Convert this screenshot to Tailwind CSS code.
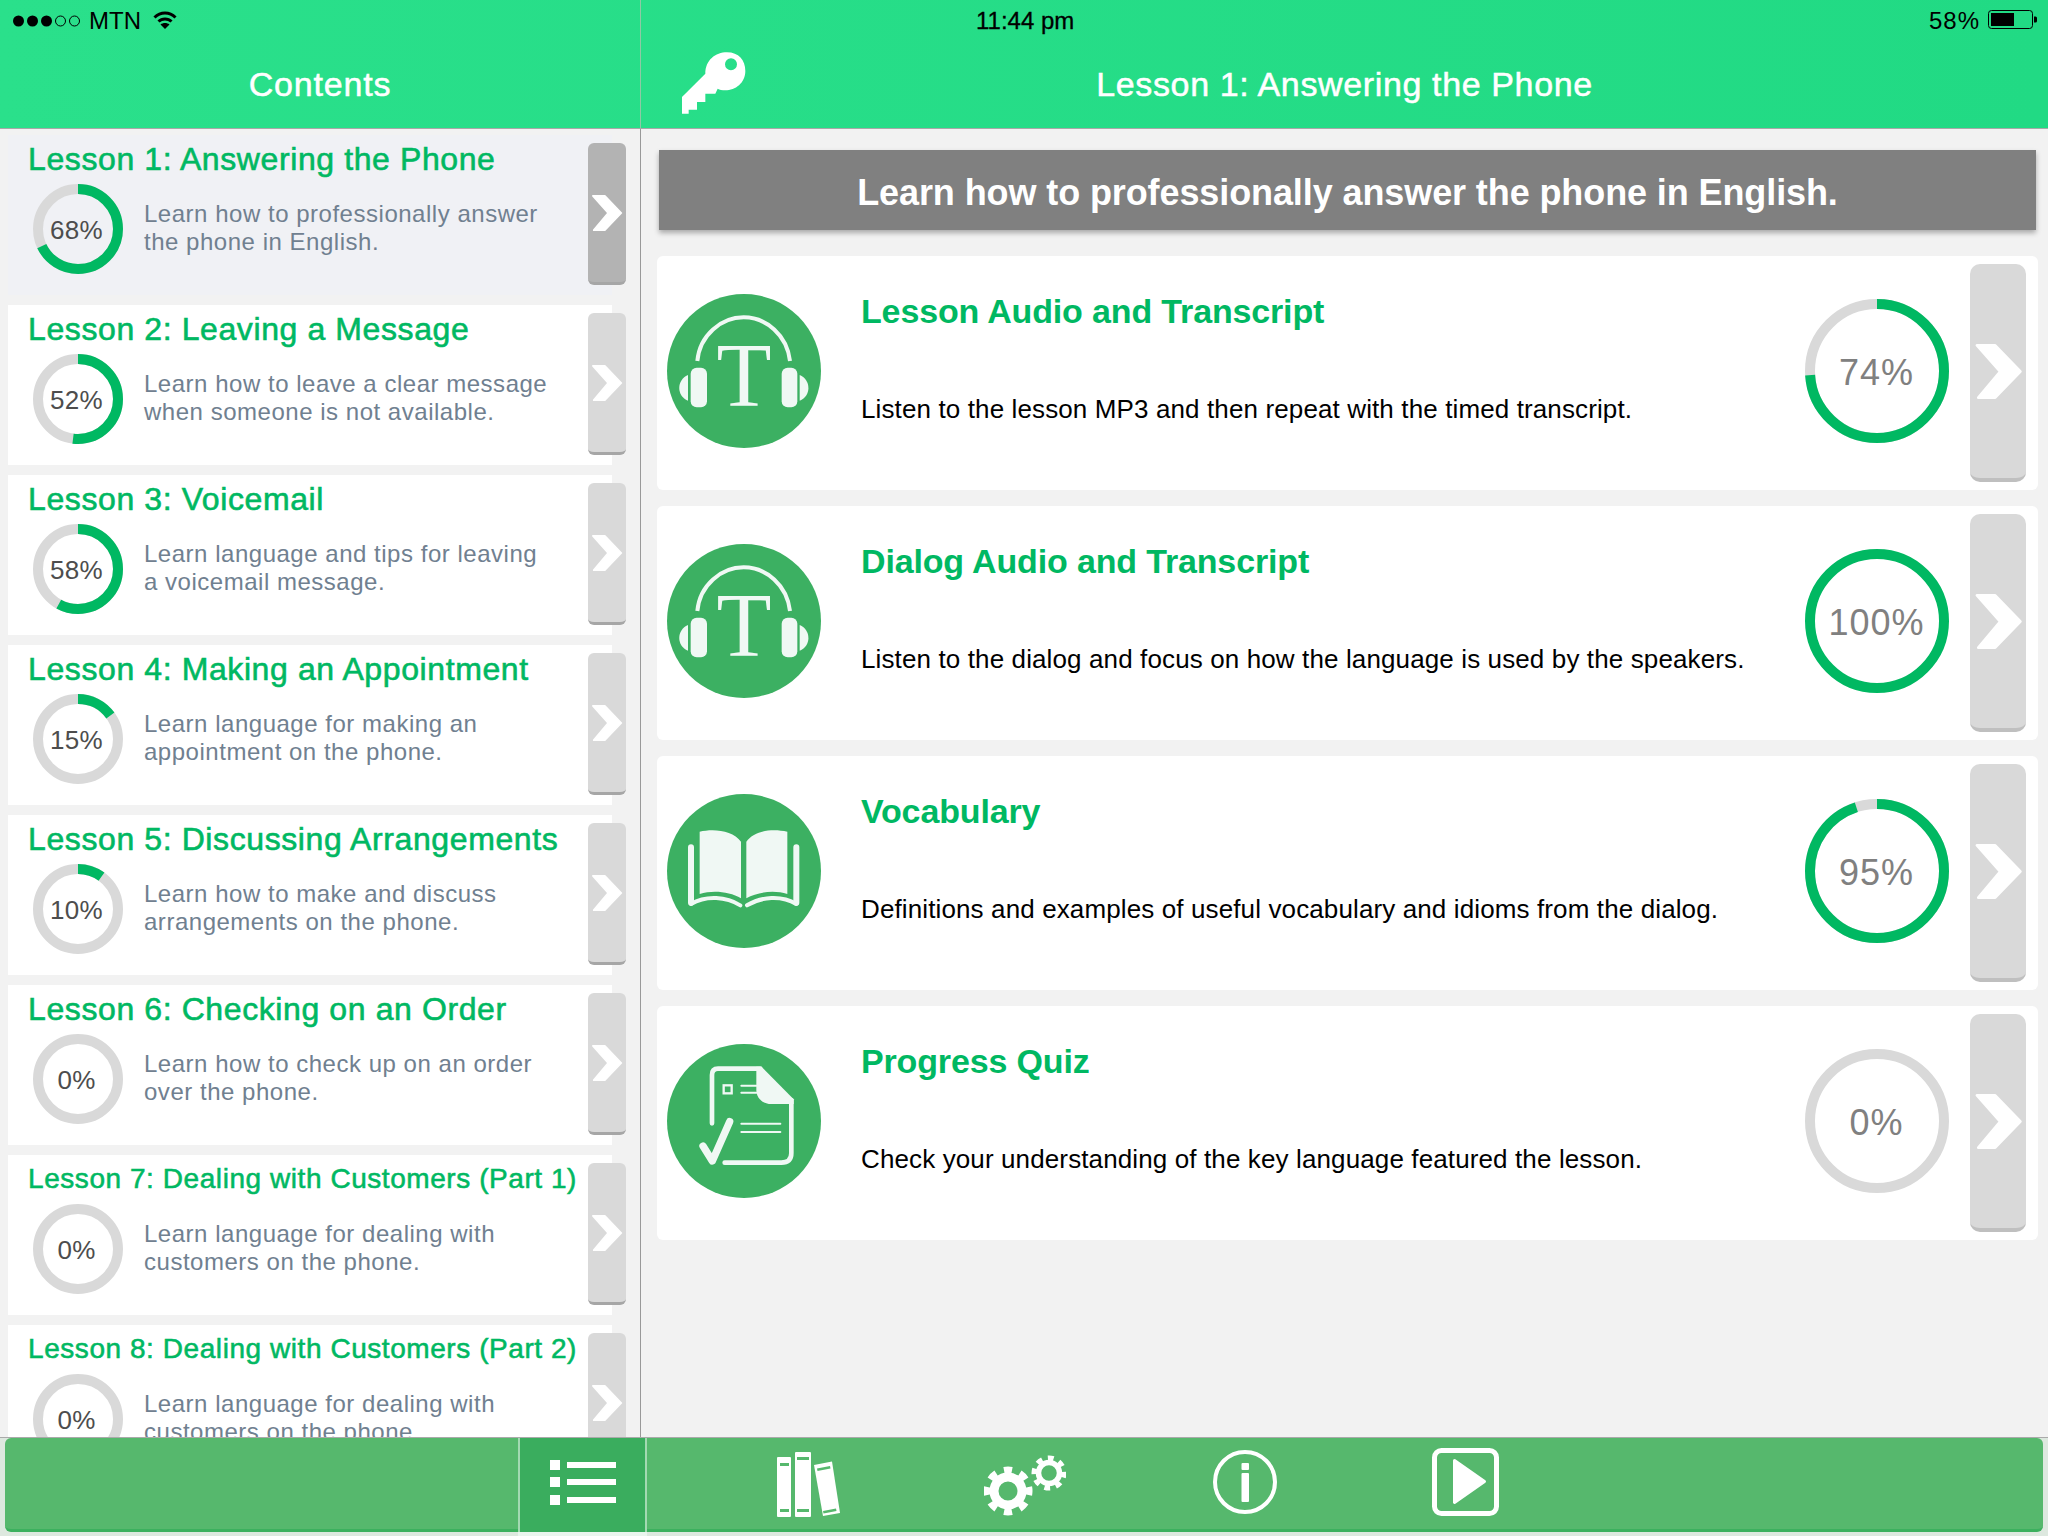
<!DOCTYPE html>
<html lang="en">
<head>
<meta charset="utf-8">
<title>Lesson 1</title>
<script src="https://cdn.jsdelivr.net/npm/@tailwindcss/browser@4"></script>
</head>
<body class="m-0 bg-[#f2f2f2]">
<div class="w-[2048px] h-[1536px] overflow-hidden flex flex-col font-['Liberation_Sans',Arial,sans-serif]">

  <!-- top band -->
  <header class="h-[129px] shrink-0 flex border-b border-[#a8a8a8] bg-gradient-to-r from-[#2ae08b] to-[#21da84]">
    <div class="w-[641px] shrink-0 border-r border-[#8fc9a5] flex flex-col">
      <div class="h-[40px] flex items-center pl-[13px] pt-[2px] text-[24px] text-black">
        <svg width="67" height="12" viewBox="0 0 67 12" class="mr-[9px]">
          <circle cx="5.5" cy="6" r="5.5"/><circle cx="19.5" cy="6" r="5.5"/><circle cx="33.5" cy="6" r="5.5"/>
          <circle cx="47.5" cy="6" r="5" fill="none" stroke="#000" stroke-width="1"/><circle cx="61.5" cy="6" r="5" fill="none" stroke="#000" stroke-width="1"/>
        </svg>
        <span>MTN</span>
        <svg width="24" height="19" viewBox="0 0 24 19" class="ml-[12px] -mt-[3px]">
          <path d="M1.5 7.5C7.5 1.5 16.5 1.5 22.5 7.5" fill="none" stroke="#000" stroke-width="3"/>
          <path d="M5.5 11.5C9 8 15 8 18.5 11.5" fill="none" stroke="#000" stroke-width="3"/>
          <path d="M7.5 14.5C10 12.5 14 12.5 16.5 14.5L12 19Z"/>
        </svg>
      </div>
      <div class="flex-1 flex items-center justify-center text-white text-[34px] tracking-[0.8px] [-webkit-text-stroke:0.5px_#fff]">Contents</div>
    </div>
    <div class="flex-1 flex flex-col">
      <div class="h-[40px] flex items-center pl-[335px] pr-[11px] pt-[2px] justify-between text-[24px] text-black">
        <span class="[-webkit-text-stroke:0.3px_#000]">11:44 pm</span>
        <div class="flex items-center gap-[8px] -mt-[2px]">
          <span class="tracking-[1px] pt-[2px]">58%</span>
          <svg width="49" height="20" viewBox="0 0 49 20">
            <rect x="0.5" y="0.5" width="44" height="18" rx="3" fill="none" stroke="#000" stroke-width="1"/>
            <rect x="3" y="3" width="23" height="13"/>
            <path d="M46 6.5h1.5a1.5 1.5 0 0 1 1.5 1.5v3a1.5 1.5 0 0 1-1.5 1.5H46Z"/>
          </svg>
        </div>
      </div>
      <div class="flex-1 grid grid-cols-[1fr_auto_1fr] items-center">
        <svg width="65" height="63" viewBox="62 62 195 189" class="ml-[40px] -mt-[4px]">
          <path fill="#fff" fill-rule="evenodd" d="M135 130C135 90 165 66 200 66C235 66 255 90 255 122C255 158 225 180 195 180C185 180 178 178 172 175L165 190H135V215H110V238H85V250H65V200Z M212 84A18 18 0 1 0 212 120A18 18 0 1 0 212 84Z"/>
        </svg>
        <div class="text-white text-[34px] tracking-[0.63px] [-webkit-text-stroke:0.5px_#fff]">Lesson 1: Answering the Phone</div>
        <div></div>
      </div>
    </div>
  </header>

  <!-- middle -->
  <main class="flex-1 min-h-0 flex">
    <aside class="w-[641px] shrink-0 border-r border-[#999] overflow-hidden pt-[6px] pl-[8px]">

      <article class="relative w-[604px] h-[160px] mb-[10px] bg-[#f0f1f5] pl-[20px] pt-[6px]">
        <h2 class="text-[32px] leading-[36px] tracking-[0.6px] text-[#00b862] [-webkit-text-stroke:0.6px_#00b862] whitespace-nowrap">Lesson 1: Answering the Phone</h2>
        <div class="flex mt-[7px] ml-[5px]">
          <div class="relative w-[90px] h-[90px] shrink-0">
            <svg width="90" height="90" viewBox="0 0 90 90" class="-rotate-90"><circle cx="45" cy="45" r="40" fill="none" stroke="#d9d9d9" stroke-width="10"/><circle cx="45" cy="45" r="40" fill="none" stroke="#00b862" stroke-width="10" pathLength="100" stroke-dasharray="68 100"/></svg>
            <span class="absolute inset-0 pt-[2px] -ml-[3px] flex items-center justify-center text-[26px] tracking-[0.3px] text-[#4d4d4d]">68%</span>
          </div>
          <p class="ml-[21px] pt-[16px] text-[24px] leading-[28px] tracking-[0.52px] text-[#708090] whitespace-pre-line">Learn how to professionally answer
the phone in English.</p>
        </div>
        <button class="absolute left-[580px] top-[8px] w-[38px] h-[142px] rounded-[6px] bg-[#b3b3b3] border-b-[3px] border-[#a6a6a6] flex items-center justify-center">
          <svg width="32" height="36" viewBox="825 1032 140 166"><path fill="#fff" stroke="#fff" stroke-width="8" stroke-linejoin="round" d="M830 1036H885L961 1115L885 1194H834L900 1115Z"/></svg>
        </button>
      </article>

      <article class="relative w-[604px] h-[160px] mb-[10px] bg-white pl-[20px] pt-[6px]">
        <h2 class="text-[32px] leading-[36px] tracking-[0.6px] text-[#00b862] [-webkit-text-stroke:0.6px_#00b862] whitespace-nowrap">Lesson 2: Leaving a Message</h2>
        <div class="flex mt-[7px] ml-[5px]">
          <div class="relative w-[90px] h-[90px] shrink-0">
            <svg width="90" height="90" viewBox="0 0 90 90" class="-rotate-90"><circle cx="45" cy="45" r="40" fill="none" stroke="#d9d9d9" stroke-width="10"/><circle cx="45" cy="45" r="40" fill="none" stroke="#00b862" stroke-width="10" pathLength="100" stroke-dasharray="52 100"/></svg>
            <span class="absolute inset-0 pt-[2px] -ml-[3px] flex items-center justify-center text-[26px] tracking-[0.3px] text-[#4d4d4d]">52%</span>
          </div>
          <p class="ml-[21px] pt-[16px] text-[24px] leading-[28px] tracking-[0.52px] text-[#708090] whitespace-pre-line">Learn how to leave a clear message
when someone is not available.</p>
        </div>
        <button class="absolute left-[580px] top-[8px] w-[38px] h-[142px] rounded-[6px] bg-[#d9d9d9] border-b-[3px] border-[#a6a6a6] flex items-center justify-center">
          <svg width="32" height="36" viewBox="825 1032 140 166"><path fill="#fff" stroke="#fff" stroke-width="8" stroke-linejoin="round" d="M830 1036H885L961 1115L885 1194H834L900 1115Z"/></svg>
        </button>
      </article>

      <article class="relative w-[604px] h-[160px] mb-[10px] bg-white pl-[20px] pt-[6px]">
        <h2 class="text-[32px] leading-[36px] tracking-[0.6px] text-[#00b862] [-webkit-text-stroke:0.6px_#00b862] whitespace-nowrap">Lesson 3: Voicemail</h2>
        <div class="flex mt-[7px] ml-[5px]">
          <div class="relative w-[90px] h-[90px] shrink-0">
            <svg width="90" height="90" viewBox="0 0 90 90" class="-rotate-90"><circle cx="45" cy="45" r="40" fill="none" stroke="#d9d9d9" stroke-width="10"/><circle cx="45" cy="45" r="40" fill="none" stroke="#00b862" stroke-width="10" pathLength="100" stroke-dasharray="58 100"/></svg>
            <span class="absolute inset-0 pt-[2px] -ml-[3px] flex items-center justify-center text-[26px] tracking-[0.3px] text-[#4d4d4d]">58%</span>
          </div>
          <p class="ml-[21px] pt-[16px] text-[24px] leading-[28px] tracking-[0.52px] text-[#708090] whitespace-pre-line">Learn language and tips for leaving
a voicemail message.</p>
        </div>
        <button class="absolute left-[580px] top-[8px] w-[38px] h-[142px] rounded-[6px] bg-[#d9d9d9] border-b-[3px] border-[#a6a6a6] flex items-center justify-center">
          <svg width="32" height="36" viewBox="825 1032 140 166"><path fill="#fff" stroke="#fff" stroke-width="8" stroke-linejoin="round" d="M830 1036H885L961 1115L885 1194H834L900 1115Z"/></svg>
        </button>
      </article>

      <article class="relative w-[604px] h-[160px] mb-[10px] bg-white pl-[20px] pt-[6px]">
        <h2 class="text-[32px] leading-[36px] tracking-[0.6px] text-[#00b862] [-webkit-text-stroke:0.6px_#00b862] whitespace-nowrap">Lesson 4: Making an Appointment</h2>
        <div class="flex mt-[7px] ml-[5px]">
          <div class="relative w-[90px] h-[90px] shrink-0">
            <svg width="90" height="90" viewBox="0 0 90 90" class="-rotate-90"><circle cx="45" cy="45" r="40" fill="none" stroke="#d9d9d9" stroke-width="10"/><circle cx="45" cy="45" r="40" fill="none" stroke="#00b862" stroke-width="10" pathLength="100" stroke-dasharray="15 100"/></svg>
            <span class="absolute inset-0 pt-[2px] -ml-[3px] flex items-center justify-center text-[26px] tracking-[0.3px] text-[#4d4d4d]">15%</span>
          </div>
          <p class="ml-[21px] pt-[16px] text-[24px] leading-[28px] tracking-[0.52px] text-[#708090] whitespace-pre-line">Learn language for making an
appointment on the phone.</p>
        </div>
        <button class="absolute left-[580px] top-[8px] w-[38px] h-[142px] rounded-[6px] bg-[#d9d9d9] border-b-[3px] border-[#a6a6a6] flex items-center justify-center">
          <svg width="32" height="36" viewBox="825 1032 140 166"><path fill="#fff" stroke="#fff" stroke-width="8" stroke-linejoin="round" d="M830 1036H885L961 1115L885 1194H834L900 1115Z"/></svg>
        </button>
      </article>

      <article class="relative w-[604px] h-[160px] mb-[10px] bg-white pl-[20px] pt-[6px]">
        <h2 class="text-[32px] leading-[36px] tracking-[0.6px] text-[#00b862] [-webkit-text-stroke:0.6px_#00b862] whitespace-nowrap">Lesson 5: Discussing Arrangements</h2>
        <div class="flex mt-[7px] ml-[5px]">
          <div class="relative w-[90px] h-[90px] shrink-0">
            <svg width="90" height="90" viewBox="0 0 90 90" class="-rotate-90"><circle cx="45" cy="45" r="40" fill="none" stroke="#d9d9d9" stroke-width="10"/><circle cx="45" cy="45" r="40" fill="none" stroke="#00b862" stroke-width="10" pathLength="100" stroke-dasharray="10 100"/></svg>
            <span class="absolute inset-0 pt-[2px] -ml-[3px] flex items-center justify-center text-[26px] tracking-[0.3px] text-[#4d4d4d]">10%</span>
          </div>
          <p class="ml-[21px] pt-[16px] text-[24px] leading-[28px] tracking-[0.52px] text-[#708090] whitespace-pre-line">Learn how to make and discuss
arrangements on the phone.</p>
        </div>
        <button class="absolute left-[580px] top-[8px] w-[38px] h-[142px] rounded-[6px] bg-[#d9d9d9] border-b-[3px] border-[#a6a6a6] flex items-center justify-center">
          <svg width="32" height="36" viewBox="825 1032 140 166"><path fill="#fff" stroke="#fff" stroke-width="8" stroke-linejoin="round" d="M830 1036H885L961 1115L885 1194H834L900 1115Z"/></svg>
        </button>
      </article>

      <article class="relative w-[604px] h-[160px] mb-[10px] bg-white pl-[20px] pt-[6px]">
        <h2 class="text-[32px] leading-[36px] tracking-[0.6px] text-[#00b862] [-webkit-text-stroke:0.6px_#00b862] whitespace-nowrap">Lesson 6: Checking on an Order</h2>
        <div class="flex mt-[7px] ml-[5px]">
          <div class="relative w-[90px] h-[90px] shrink-0">
            <svg width="90" height="90" viewBox="0 0 90 90" class="-rotate-90"><circle cx="45" cy="45" r="40" fill="none" stroke="#d9d9d9" stroke-width="10"/></svg>
            <span class="absolute inset-0 pt-[2px] -ml-[3px] flex items-center justify-center text-[26px] tracking-[0.3px] text-[#4d4d4d]">0%</span>
          </div>
          <p class="ml-[21px] pt-[16px] text-[24px] leading-[28px] tracking-[0.52px] text-[#708090] whitespace-pre-line">Learn how to check up on an order
over the phone.</p>
        </div>
        <button class="absolute left-[580px] top-[8px] w-[38px] h-[142px] rounded-[6px] bg-[#d9d9d9] border-b-[3px] border-[#a6a6a6] flex items-center justify-center">
          <svg width="32" height="36" viewBox="825 1032 140 166"><path fill="#fff" stroke="#fff" stroke-width="8" stroke-linejoin="round" d="M830 1036H885L961 1115L885 1194H834L900 1115Z"/></svg>
        </button>
      </article>

      <article class="relative w-[604px] h-[160px] mb-[10px] bg-white pl-[20px] pt-[6px]">
        <h2 class="text-[28px] leading-[36px] tracking-[0.56px] text-[#00b862] [-webkit-text-stroke:0.55px_#00b862] whitespace-nowrap">Lesson 7: Dealing with Customers (Part 1)</h2>
        <div class="flex mt-[7px] ml-[5px]">
          <div class="relative w-[90px] h-[90px] shrink-0">
            <svg width="90" height="90" viewBox="0 0 90 90" class="-rotate-90"><circle cx="45" cy="45" r="40" fill="none" stroke="#d9d9d9" stroke-width="10"/></svg>
            <span class="absolute inset-0 pt-[2px] -ml-[3px] flex items-center justify-center text-[26px] tracking-[0.3px] text-[#4d4d4d]">0%</span>
          </div>
          <p class="ml-[21px] pt-[16px] text-[24px] leading-[28px] tracking-[0.52px] text-[#708090] whitespace-pre-line">Learn language for dealing with
customers on the phone.</p>
        </div>
        <button class="absolute left-[580px] top-[8px] w-[38px] h-[142px] rounded-[6px] bg-[#d9d9d9] border-b-[3px] border-[#a6a6a6] flex items-center justify-center">
          <svg width="32" height="36" viewBox="825 1032 140 166"><path fill="#fff" stroke="#fff" stroke-width="8" stroke-linejoin="round" d="M830 1036H885L961 1115L885 1194H834L900 1115Z"/></svg>
        </button>
      </article>

      <article class="relative w-[604px] h-[160px] mb-[10px] bg-white pl-[20px] pt-[6px]">
        <h2 class="text-[28px] leading-[36px] tracking-[0.56px] text-[#00b862] [-webkit-text-stroke:0.55px_#00b862] whitespace-nowrap">Lesson 8: Dealing with Customers (Part 2)</h2>
        <div class="flex mt-[7px] ml-[5px]">
          <div class="relative w-[90px] h-[90px] shrink-0">
            <svg width="90" height="90" viewBox="0 0 90 90" class="-rotate-90"><circle cx="45" cy="45" r="40" fill="none" stroke="#d9d9d9" stroke-width="10"/></svg>
            <span class="absolute inset-0 pt-[2px] -ml-[3px] flex items-center justify-center text-[26px] tracking-[0.3px] text-[#4d4d4d]">0%</span>
          </div>
          <p class="ml-[21px] pt-[16px] text-[24px] leading-[28px] tracking-[0.52px] text-[#708090] whitespace-pre-line">Learn language for dealing with
customers on the phone.</p>
        </div>
        <button class="absolute left-[580px] top-[8px] w-[38px] h-[142px] rounded-[6px] bg-[#d9d9d9] border-b-[3px] border-[#a6a6a6] flex items-center justify-center">
          <svg width="32" height="36" viewBox="825 1032 140 166"><path fill="#fff" stroke="#fff" stroke-width="8" stroke-linejoin="round" d="M830 1036H885L961 1115L885 1194H834L900 1115Z"/></svg>
        </button>
      </article>
    </aside>

    <section class="flex-1 min-w-0 pl-[16px] pr-[10px] pt-[21px] bg-[#f2f2f2]">
      <div class="ml-[2px] mr-[2px] h-[80px] pt-[5px] bg-[#808080] shadow-[0_3px_5px_rgba(0,0,0,0.3)] flex items-center justify-center text-white text-[36px] font-bold tracking-[-0.1px] mb-[26px]">Learn how to professionally answer the phone in English.</div>

      <div class="flex flex-col gap-[16px]">
        <article class="h-[234px] bg-white rounded-[6px] flex items-start pl-[10px] pr-[12px]">
          <svg width="154" height="154" viewBox="52 42 462 462" class="mt-[38px] shrink-0">
            <circle cx="283" cy="273" r="231" fill="#3cb062"/>
            <g fill="#f0f8f4">
              <path d="M143 243C150 165 215 112 282 112C350 112 412 165 421 243" fill="none" stroke="#f0f8f4" stroke-width="12"/>
              <text x="283" y="378" text-anchor="middle" font-family="'Liberation Serif',serif" font-size="270">T</text>
              <rect x="123" y="263" width="49" height="119" rx="18"/><rect x="396" y="263" width="47" height="119" rx="18"/>
              <path d="M115 285C80 300 80 348 115 362Z"/><path d="M450 285C485 300 485 348 450 362Z"/>
            </g>
          </svg>
          <div class="ml-[40px] pt-[35px]">
            <h3 class="text-[34px] leading-[40px] font-bold tracking-[-0.15px] text-[#00b862]">Lesson Audio and Transcript</h3>
            <p class="mt-[60px] text-[26px] leading-[36px] tracking-[0.12px] text-black">Listen to the lesson MP3 and then repeat with the timed transcript.</p>
          </div>
          <div class="relative ml-auto mt-[43px] w-[144px] h-[144px] shrink-0">
            <svg width="144" height="144" viewBox="0 0 144 144" class="-rotate-90"><circle cx="72" cy="72" r="67" fill="none" stroke="#d9d9d9" stroke-width="10"/><circle cx="72" cy="72" r="67" fill="none" stroke="#00b862" stroke-width="10" pathLength="100" stroke-dasharray="74 100"/></svg>
            <span class="absolute inset-0 pt-[4px] -ml-[1px] flex items-center justify-center text-[36px] tracking-[1px] text-[#808080]">74%</span>
          </div>
          <button class="ml-[21px] mt-[8px] w-[56px] h-[218px] shrink-0 rounded-[10px] bg-[#d9d9d9] border-b-4 border-[#bfbfbf] flex items-center justify-center">
            <svg width="47" height="55" viewBox="825 1032 140 166"><path fill="#fff" stroke="#fff" stroke-width="8" stroke-linejoin="round" d="M830 1036H885L961 1115L885 1194H834L900 1115Z"/></svg>
          </button>
        </article>

        <article class="h-[234px] bg-white rounded-[6px] flex items-start pl-[10px] pr-[12px]">
          <svg width="154" height="154" viewBox="52 42 462 462" class="mt-[38px] shrink-0">
            <circle cx="283" cy="273" r="231" fill="#3cb062"/>
            <g fill="#f0f8f4">
              <path d="M143 243C150 165 215 112 282 112C350 112 412 165 421 243" fill="none" stroke="#f0f8f4" stroke-width="12"/>
              <text x="283" y="378" text-anchor="middle" font-family="'Liberation Serif',serif" font-size="270">T</text>
              <rect x="123" y="263" width="49" height="119" rx="18"/><rect x="396" y="263" width="47" height="119" rx="18"/>
              <path d="M115 285C80 300 80 348 115 362Z"/><path d="M450 285C485 300 485 348 450 362Z"/>
            </g>
          </svg>
          <div class="ml-[40px] pt-[35px]">
            <h3 class="text-[34px] leading-[40px] font-bold tracking-[-0.15px] text-[#00b862]">Dialog Audio and Transcript</h3>
            <p class="mt-[60px] text-[26px] leading-[36px] tracking-[0.12px] text-black">Listen to the dialog and focus on how the language is used by the speakers.</p>
          </div>
          <div class="relative ml-auto mt-[43px] w-[144px] h-[144px] shrink-0">
            <svg width="144" height="144" viewBox="0 0 144 144" class="-rotate-90"><circle cx="72" cy="72" r="67" fill="none" stroke="#00b862" stroke-width="10"/></svg>
            <span class="absolute inset-0 pt-[4px] -ml-[1px] flex items-center justify-center text-[36px] tracking-[1px] text-[#808080]">100%</span>
          </div>
          <button class="ml-[21px] mt-[8px] w-[56px] h-[218px] shrink-0 rounded-[10px] bg-[#d9d9d9] border-b-4 border-[#bfbfbf] flex items-center justify-center">
            <svg width="47" height="55" viewBox="825 1032 140 166"><path fill="#fff" stroke="#fff" stroke-width="8" stroke-linejoin="round" d="M830 1036H885L961 1115L885 1194H834L900 1115Z"/></svg>
          </button>
        </article>

        <article class="h-[234px] bg-white rounded-[6px] flex items-start pl-[10px] pr-[12px]">
          <svg width="154" height="154" viewBox="52 42 462 462" class="mt-[38px] shrink-0">
            <circle cx="283" cy="273" r="231" fill="#3cb062"/>
            <g fill="#f0f8f4">
              <path d="M150 155C190 145 250 150 274 185V355C240 335 190 330 150 342Z"/>
              <path d="M290 185C315 150 370 145 413 155V342C375 330 325 335 290 355Z"/>
            </g>
            <g fill="none" stroke="#f0f8f4" stroke-linecap="round">
              <path d="M124 202V368M440 202V368" stroke-width="18"/>
              <path d="M124 372C170 345 230 350 272 376M292 376C335 350 395 345 440 372" stroke-width="12"/>
            </g>
          </svg>
          <div class="ml-[40px] pt-[35px]">
            <h3 class="text-[34px] leading-[40px] font-bold tracking-[-0.15px] text-[#00b862]">Vocabulary</h3>
            <p class="mt-[60px] text-[26px] leading-[36px] tracking-[0.12px] text-black">Definitions and examples of useful vocabulary and idioms from the dialog.</p>
          </div>
          <div class="relative ml-auto mt-[43px] w-[144px] h-[144px] shrink-0">
            <svg width="144" height="144" viewBox="0 0 144 144" class="-rotate-90"><circle cx="72" cy="72" r="67" fill="none" stroke="#d9d9d9" stroke-width="10"/><circle cx="72" cy="72" r="67" fill="none" stroke="#00b862" stroke-width="10" pathLength="100" stroke-dasharray="95 100"/></svg>
            <span class="absolute inset-0 pt-[4px] -ml-[1px] flex items-center justify-center text-[36px] tracking-[1px] text-[#808080]">95%</span>
          </div>
          <button class="ml-[21px] mt-[8px] w-[56px] h-[218px] shrink-0 rounded-[10px] bg-[#d9d9d9] border-b-4 border-[#bfbfbf] flex items-center justify-center">
            <svg width="47" height="55" viewBox="825 1032 140 166"><path fill="#fff" stroke="#fff" stroke-width="8" stroke-linejoin="round" d="M830 1036H885L961 1115L885 1194H834L900 1115Z"/></svg>
          </button>
        </article>

        <article class="h-[234px] bg-white rounded-[6px] flex items-start pl-[10px] pr-[12px]">
          <svg width="154" height="154" viewBox="52 792 462 462" class="mt-[38px] shrink-0">
            <circle cx="283" cy="1023" r="231" fill="#3cb062"/>
            <path fill="#f0f8f4" d="M320 860H335L432 958V972H365C340 972 320 955 320 930Z"/>
            <g fill="none" stroke="#f0f8f4" stroke-linecap="round">
              <path d="M187 1030V885Q187 866 205 866H332M425 960V1120Q425 1148 395 1148H225" stroke-width="14"/>
              <rect x="222" y="916" width="24" height="24" stroke-width="7"/>
              <path d="M275 917H320M275 938H320M275 1031H392M275 1056H392" stroke-width="6"/>
              <path d="M160 1098L188 1143L240 1025" stroke-width="22" stroke-linejoin="round"/>
            </g>
          </svg>
          <div class="ml-[40px] pt-[35px]">
            <h3 class="text-[34px] leading-[40px] font-bold tracking-[-0.15px] text-[#00b862]">Progress Quiz</h3>
            <p class="mt-[60px] text-[26px] leading-[36px] tracking-[0.12px] text-black">Check your understanding of the key language featured the lesson.</p>
          </div>
          <div class="relative ml-auto mt-[43px] w-[144px] h-[144px] shrink-0">
            <svg width="144" height="144" viewBox="0 0 144 144" class="-rotate-90"><circle cx="72" cy="72" r="67" fill="none" stroke="#d9d9d9" stroke-width="10"/></svg>
            <span class="absolute inset-0 pt-[4px] -ml-[1px] flex items-center justify-center text-[36px] tracking-[1px] text-[#808080]">0%</span>
          </div>
          <button class="ml-[21px] mt-[8px] w-[56px] h-[218px] shrink-0 rounded-[10px] bg-[#d9d9d9] border-b-4 border-[#bfbfbf] flex items-center justify-center">
            <svg width="47" height="55" viewBox="825 1032 140 166"><path fill="#fff" stroke="#fff" stroke-width="8" stroke-linejoin="round" d="M830 1036H885L961 1115L885 1194H834L900 1115Z"/></svg>
          </button>
        </article>
      </div>
    </section>
  </main>

  <!-- tab bar -->
  <footer class="h-[99px] shrink-0 border-t border-[#aaaaaa] bg-[#dde8df] flex flex-col">
    <div class="h-[94px] shrink-0 mx-[5px] bg-[#56b86d] border-b-[3px] border-[#3cb05e] rounded-[6px] flex items-stretch">
      <div class="ml-[513px] w-[129px] h-[94px] shrink-0 bg-[#3aad5e] border-x-2 border-[#a3d9b2]">
        <svg width="125" height="94" viewBox="520 1438 125 94">
          <g fill="#fff"><rect x="550" y="1460" width="10" height="10"/><rect x="550" y="1477" width="10" height="10"/><rect x="550" y="1495" width="10" height="10"/>
          <rect x="567" y="1462" width="49" height="6"/><rect x="567" y="1479" width="49" height="6"/><rect x="567" y="1497" width="49" height="6"/></g>
        </svg>
      </div>
      <svg width="63" height="91" viewBox="777 1438 63 91" class="ml-[130px] shrink-0">
        <rect x="777" y="1457" width="14" height="60" rx="1" fill="#fff"/><rect x="795" y="1452" width="16" height="65" rx="1" fill="#fff"/>
        <path fill="#fff" d="M814 1465L832 1461.500L840 1513L823 1516Z"/>
        <g fill="#56b86d"><rect x="780" y="1463" width="9" height="3"/><rect x="780" y="1509" width="9" height="3"/><rect x="797" y="1457" width="12" height="3"/><rect x="797" y="1509" width="12" height="3"/>
        <path d="M817 1468.500L830 1466L830.500 1468.500L817.500 1471ZM823 1511L836 1508.500L836.500 1511L823.500 1513.500Z"/></g>
      </svg>
      <svg width="82" height="91" viewBox="984 1438 82 91" class="ml-[144px] shrink-0">
        <g fill="none" stroke="#fff">
          <circle cx="1008" cy="1491" r="14" stroke-width="9"/>
          <circle cx="1008" cy="1491" r="21" stroke-width="7" pathLength="16" stroke-dasharray="1 1" stroke-dashoffset="0.5"/>
          <circle cx="1049" cy="1473" r="10.500" stroke-width="5.500"/>
          <circle cx="1049" cy="1473" r="15" stroke-width="5" pathLength="16" stroke-dasharray="1 1" stroke-dashoffset="0.2"/>
        </g>
      </svg>
      <svg width="64" height="91" viewBox="1213 1438 64 91" class="ml-[147px] shrink-0">
        <circle cx="1245" cy="1482" r="30" fill="none" stroke="#fff" stroke-width="4"/>
        <rect x="1241.500" y="1463" width="7.500" height="7" rx="1" fill="#fff"/><rect x="1241.500" y="1473" width="7.500" height="29" rx="1" fill="#fff"/>
      </svg>
      <svg width="67" height="91" viewBox="1432 1438 67 91" class="ml-[155px] shrink-0">
        <rect x="1434.500" y="1450.500" width="62" height="63" rx="7" fill="none" stroke="#fff" stroke-width="5"/>
        <path fill="#fff" stroke="#fff" stroke-width="3" stroke-linejoin="round" d="M1454.500 1460.500L1484.500 1481.500L1454.500 1502.500Z"/>
      </svg>
    </div>
    <div class="flex-1"><div class="ml-[518px] w-[129px] h-full bg-[#eaf5ee]"></div></div>
  </footer>
</div>
</body>
</html>
